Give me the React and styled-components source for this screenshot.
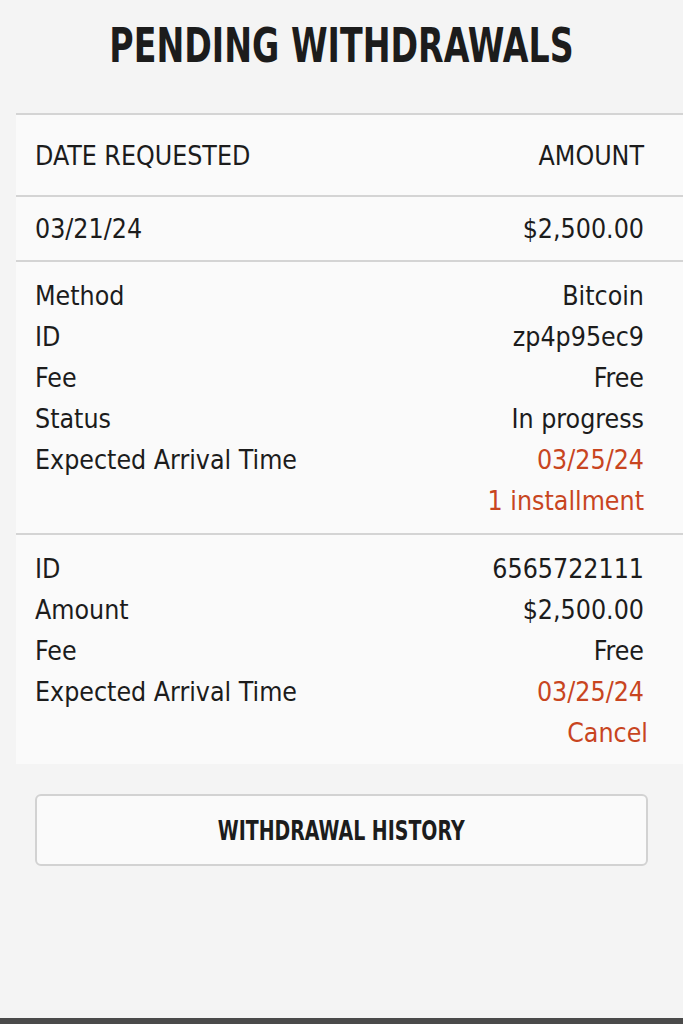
import React from "react";
import styled, { createGlobalStyle } from "styled-components";

const GlobalStyle = createGlobalStyle`
  html, body {
    margin: 0;
    padding: 0;
    background: #f4f4f4;
  }
  body {
    font-family: "DejaVu Sans Condensed", "DejaVu Sans", "Liberation Sans", sans-serif;
    color: #1c1c1c;
  }
`;

const Page = styled.div`
  min-height: 1024px;
  display: flex;
  flex-direction: column;
  background: #f4f4f4;
`;

const Title = styled.h1`
  margin: 0;
  height: 113px;
  box-sizing: border-box;
  padding-bottom: 24px;
  display: flex;
  align-items: center;
  justify-content: center;
  font-size: 48px;
  font-weight: 700;
  color: #1c1c1c;
`;

const Narrow = styled.span`
  display: inline-block;
  white-space: nowrap;
  transform: scaleX(${(p) => p.$scale});
`;

const Panel = styled.div`
  margin-left: 16px;
  background: #fafafa;
  border-top: 2px solid #d4d4d4;
`;

const Row = styled.div`
  display: flex;
  align-items: center;
  justify-content: space-between;
  height: ${(p) => p.$height || 41}px;
  padding: 0 39px 0 19px;
  font-size: 26.5px;
  border-bottom: ${(p) => (p.$divider ? "2px solid #d4d4d4" : "none")};
`;

const Section = styled.div`
  padding: 13px 0 ${(p) => p.$bottom}px;
  border-bottom: ${(p) => (p.$divider ? "2px solid #d4d4d4" : "none")};
`;

const Value = styled.span`
  color: ${(p) => (p.$accent ? "#c8451f" : "#1c1c1c")};
  margin-right: ${(p) => p.$shift || 0}px;
`;

const HistoryButton = styled.button`
  margin: 30px 35px 0;
  height: 72px;
  border: 2px solid #d2d2d2;
  border-radius: 6px;
  background: #fafafa;
  font-family: inherit;
  font-size: 27px;
  font-weight: 700;
  color: #1c1c1c;
  cursor: pointer;
`;

const BottomBar = styled.div`
  margin-top: auto;
  height: 6px;
  background: #4a4a4a;
`;

const first = [
  ["Method", "Bitcoin"],
  ["ID", "zp4p95ec9"],
  ["Fee", "Free"],
  ["Status", "In progress"],
  ["Expected Arrival Time", "03/25/24", true],
  ["", "1 installment", true],
];

const second = [
  ["ID", "6565722111"],
  ["Amount", "$2,500.00"],
  ["Fee", "Free"],
  ["Expected Arrival Time", "03/25/24", true],
  ["", "Cancel", true, -4],
];

const DetailRows = ({ rows }) =>
  rows.map(([label, value, accent, shift], i) => (
    <Row key={i}>
      <span>{label}</span>
      <Value $accent={accent} $shift={shift}>
        {value}
      </Value>
    </Row>
  ));

const App = () => {
  return (
    <Page>
      <GlobalStyle />
      <Title>
        <Narrow $scale={0.77}>PENDING WITHDRAWALS</Narrow>
      </Title>
      <Panel>
        <Row $height={80} $divider>
          <span>DATE REQUESTED</span>
          <span>AMOUNT</span>
        </Row>
        <Row $height={63} $divider>
          <span>03/21/24</span>
          <span>$2,500.00</span>
        </Row>
        <Section $bottom={12} $divider>
          <DetailRows rows={first} />
        </Section>
        <Section $bottom={11}>
          <DetailRows rows={second} />
        </Section>
      </Panel>
      <HistoryButton>
        <Narrow $scale={0.78}>WITHDRAWAL HISTORY</Narrow>
      </HistoryButton>
      <BottomBar />
    </Page>
  );
};

export default App;
